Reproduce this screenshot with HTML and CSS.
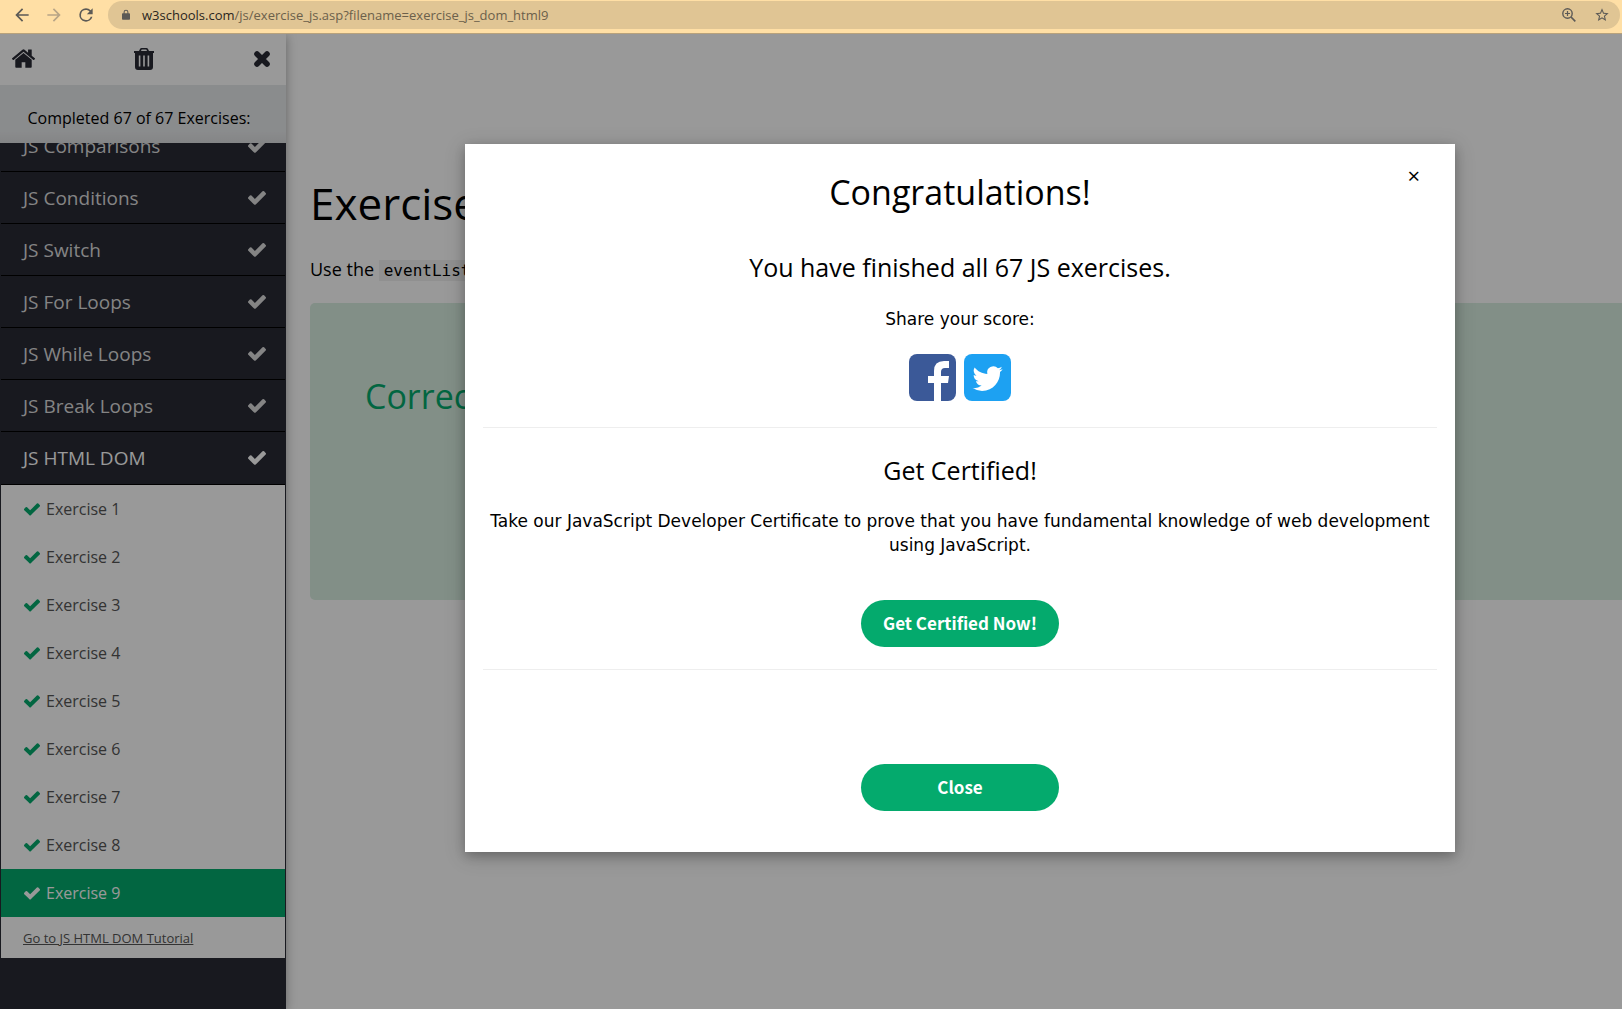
FILE: index.html
```html
<!DOCTYPE html>
<html lang="en">
<head>
<meta charset="utf-8">
<title>Exercise</title>
<link rel="stylesheet" href="styles.css">
</head>
<body>
<svg class="defs" aria-hidden="true">
  <symbol id="check" viewBox="121 341 1550 1188"><path d="M1671 566q0 40-28 68l-724 724-136 136q-28 28-68 28t-68-28l-136-136-362-362q-28-28-28-68t28-68l136-136q28-28 68-28t68 28l294 295 656-657q28-28 68-28t68 28l136 136q28 28 28 68z"/></symbol>
</svg>
<header class="browser">
  <button class="nav" aria-label="Back"><svg viewBox="0 0 24 24"><path d="M20 11H7.8l5.6-5.6L12 4l-8 8 8 8 1.4-1.4L7.8 13H20z"/></svg></button>
  <button class="nav dim" aria-label="Forward"><svg viewBox="0 0 24 24"><path d="M4 11h12.2l-5.6-5.6L12 4l8 8-8 8-1.4-1.4 5.6-5.6H4z"/></svg></button>
  <button class="nav" aria-label="Reload"><svg viewBox="0 0 24 24"><path d="M17.65 6.35A7.96 7.96 0 0 0 12 4a8 8 0 1 0 7.73 10h-2.08A6 6 0 1 1 12 6c1.66 0 3.14.69 4.22 1.78L13 11h7V4z"/></svg></button>
  <div class="address">
    <svg class="lock" viewBox="0 0 10 13"><path d="M1 5h1V3.500a3 3 0 0 1 6 0V5h1a1 1 0 0 1 1 1v6a1 1 0 0 1-1 1H1a1 1 0 0 1-1-1V6a1 1 0 0 1 1-1zM3.300 5h3.400V3.500a1.700 1.700 0 0 0-3.400 0z"/></svg>
    <span class="url"><b>w3schools.com</b>/js/exercise_js.asp?filename=exercise_js_dom_html9</span>
    <button class="tool" aria-label="Zoom"><svg class="outline" viewBox="0 0 14 14"><circle cx="5.500" cy="5.500" r="4.700" stroke-width="1.400"/><path d="M9 9l4.300 4.300" stroke-width="1.700"/><path d="M5.500 3v5M3 5.500h5" stroke-width="1.200"/></svg></button>
    <button class="tool" aria-label="Bookmark"><svg viewBox="0 0 24 24"><path d="M22 9.240l-7.190-.620L12 2 9.190 8.630 2 9.240l5.460 4.730L5.820 21 12 17.270 18.180 21l-1.630-7.030zM12 15.400l-3.760 2.270 1-4.280-3.320-2.880 4.380-.380L12 6.100l1.710 4.040 4.380.380-3.320 2.880 1 4.280z"/></svg></button>
  </div>
</header>
<div class="page">
  <aside class="sidebar">
    <div class="actions">
      <a href="#" aria-label="Home"><svg class="home" viewBox="0 0 1612 1283"><path d="M1382 739v480q0 26-19 45t-45 19H934V899H678v384H294q-26 0-45-19t-19-45V739q0-1 .5-3t.5-3l575-474 575 474q1 2 1 6zm223-69l-62 74q-8 9-21 11h-3q-13 0-21-7L806 171 114 748q-12 8-24 7-13-2-21-11L7 670q-8-10-7-23.500T11 625L730 26q32-26 76-26t76 26l244 204V35q0-14 9-23t23-9h192q14 0 23 9t9 23v408l219 182q10 8 11 21.500t-7 23.500z"/></svg></a>
      <button aria-label="Reset"><svg class="trash" viewBox="0 0 20 22"><path fill-rule="evenodd" d="M0 3h5l1-2q.5-1 1.500-1h5q1 0 1.500 1l1 2h5v2h-1v14q0 3-3 3H4q-3 0-3-3V5H0zm7 0h6l-.7-1.500H7.700zM4.800 7.500v11h1.600v-11zm4.400 0v11h1.600v-11zm4.400 0v11h1.600v-11z"/></svg></button>
      <button aria-label="Close menu"><svg class="cross" viewBox="0 0 18 18"><path d="M4 4l10 10M14 4L4 14" stroke="currentColor" stroke-width="5.600"/></svg></button>
    </div>
    <p class="progress">Completed 67 of 67 Exercises:</p>
    <nav class="topics">
      <a class="topic first" href="#">JS Comparisons<svg><use href="#check"/></svg></a>
      <a class="topic" href="#">JS Conditions<svg><use href="#check"/></svg></a>
      <a class="topic" href="#">JS Switch<svg><use href="#check"/></svg></a>
      <a class="topic" href="#">JS For Loops<svg><use href="#check"/></svg></a>
      <a class="topic" href="#">JS While Loops<svg><use href="#check"/></svg></a>
      <a class="topic" href="#">JS Break Loops<svg><use href="#check"/></svg></a>
      <a class="topic open" href="#">JS HTML DOM<svg><use href="#check"/></svg></a>
      <div class="exercises">
        <a href="#"><svg><use href="#check"/></svg>Exercise 1</a>
        <a href="#"><svg><use href="#check"/></svg>Exercise 2</a>
        <a href="#"><svg><use href="#check"/></svg>Exercise 3</a>
        <a href="#"><svg><use href="#check"/></svg>Exercise 4</a>
        <a href="#"><svg><use href="#check"/></svg>Exercise 5</a>
        <a href="#"><svg><use href="#check"/></svg>Exercise 6</a>
        <a href="#"><svg><use href="#check"/></svg>Exercise 7</a>
        <a href="#"><svg><use href="#check"/></svg>Exercise 8</a>
        <a class="current" href="#"><svg><use href="#check"/></svg>Exercise 9</a>
        <a class="tutorial" href="#">Go to JS HTML DOM Tutorial</a>
      </div>
    </nav>
  </aside>
  <main class="content">
    <h1>Exercise:</h1>
    <p class="task">Use the <code>eventListener</code></p>
    <section class="result"><h2>Correct!</h2></section>
  </main>
  <div class="overlay">
    <section class="modal" role="dialog" aria-labelledby="done">
      <button class="dismiss" aria-label="Dismiss">×</button>
      <h2 id="done">Congratulations!</h2>
      <h3 class="finished">You have finished all 67 JS exercises.</h3>
      <p class="share-label">Share your score:</p>
      <div class="share">
        <a href="#" aria-label="Facebook"><svg viewBox="0 0 47 47"><rect width="47" height="47" rx="8" fill="#3b5998"/><path fill="#fff" d="M25 47V29h-6v-7h6v-5q0-10 10-10h5v7h-4q-4 0-4 4v4h8l-1 7h-7v18z"/></svg></a>
        <a href="#" aria-label="Twitter"><svg viewBox="0 0 47 47"><rect width="47" height="47" rx="8" fill="#1da1f2"/><path fill="#fff" transform="translate(8.500 9.500) scale(1.260)" d="M23.950 4.570a10 10 0 0 1-2.820.770 4.960 4.960 0 0 0 2.160-2.720c-.950.550-2 .950-3.130 1.180a4.920 4.920 0 0 0-8.380 4.480C7.690 8.100 4.070 6.130 1.640 3.160a4.920 4.920 0 0 0 1.520 6.570 4.900 4.900 0 0 1-2.230-.610v.060a4.920 4.920 0 0 0 3.950 4.830 5 5 0 0 1-2.210.080 4.940 4.940 0 0 0 4.600 3.420A9.870 9.870 0 0 1 0 19.540a13.990 13.990 0 0 0 7.550 2.210c9.140 0 14.300-7.720 14.300-14.420 0-.220-.010-.440-.030-.660a10 10 0 0 0 2.130-2.100z"/></svg></a>
      </div>
      <hr>
      <h3 class="certified">Get Certified!</h3>
      <p class="pitch">Take our JavaScript Developer Certificate to prove that you have fundamental knowledge of web development using JavaScript.</p>
      <button class="primary">Get Certified Now!</button>
      <hr class="second">
      <button class="primary">Close</button>
    </section>
  </div>
</div>
</body>
</html>
```
FILE: styles.css
```css
* { box-sizing: border-box; }
body {
  margin: 0;
  min-height: 100vh;
  display: flex;
  flex-direction: column;
  background: #fff;
  color: #000;
  font: 16px/24px "Open Sans", "Noto Sans", sans-serif;
}
h1, h2, h3, p { margin: 0; font-weight: 400; }
a { color: inherit; text-decoration: none; }
button { padding: 0; border: 0; background: none; color: inherit; font: inherit; }
svg { display: block; fill: currentColor; }
.outline { fill: none; stroke: currentColor; }
.defs { position: absolute; width: 0; height: 0; }

.browser {
  display: flex;
  align-items: center;
  height: 34px;
  padding: 0 2px 4px 12px;
  border-bottom: 1px solid #b8a27c;
  background: #ffdfa5;
  color: #5c5a56;
}
.nav { width: 20px; margin-right: 12px; }
.nav svg { width: 20px; height: 20px; }
.nav.dim { color: #b8a586; }
.address {
  flex: 1;
  display: flex;
  align-items: center;
  height: 28px;
  padding: 0 10px 0 14px;
  border-radius: 14px;
  background: #e0c594;
}
.lock { width: 8px; height: 11px; margin-right: 12px; }
.url { flex: 1; font: 13px/20px "Open Sans", "Noto Sans", sans-serif; color: #6b604b; }
.url b { font-weight: 400; color: #2b261d; }
.tool { margin-left: 18px; }
.tool svg { width: 14px; height: 14px; }
.tool:last-child svg { width: 16px; height: 16px; }

.page { position: relative; flex: 1; display: flex; overflow: hidden; }
.sidebar {
  width: 286px;
  display: flex;
  flex-direction: column;
  background: #282a35;
  box-shadow: 0 2px 10px rgba(0, 0, 0, .35);
}
.actions {
  display: flex;
  align-items: center;
  justify-content: space-between;
  height: 51px;
  padding: 0 15px 2px 12px;
  background: #fff;
  color: #282a35;
}
.home { width: 23px; height: 19px; }
.trash { width: 20px; height: 22px; }
.cross { width: 18px; height: 18px; stroke-linecap: round; }
.progress {
  height: 58px;
  padding: 21px 8px 0 0;
  background: linear-gradient(#e7e9eb 80%, #dcdee0);
  text-align: center;
}
.topics { margin: 0 1px; overflow: hidden; }
.topic {
  display: flex;
  align-items: center;
  justify-content: space-between;
  height: 52px;
  padding: 0 19px 0 22px;
  border-bottom: 1px solid #000;
  color: #ddd;
  font-size: 19px;
}
.topic svg { width: 18px; height: 14px; }
.topic.first { margin-top: -23px; }
.topic.open { height: 53px; color: #fff; }
.exercises { background: #fff; color: #555; }
.exercises a { display: flex; align-items: center; height: 48px; padding: 0 0 0 23px; font-size: 16px; }
.exercises svg { width: 16px; height: 13px; margin-right: 6px; color: #04aa6d; }
.exercises .current { background: #04aa6d; color: #fff; }
.exercises .current svg { color: #fff; }
.exercises .tutorial { height: 41px; padding-left: 22px; font-size: 13px; text-decoration: underline; }

.content { flex: 1; padding: 137px 0 0 24px; }
h1 { font-size: 44px; line-height: 64px; }
.task { margin: 21px 0; font-size: 18px; line-height: 26px; }
.task code { padding: 1px 5px; background: #f1f1f1; font: 16px "DejaVu Sans Mono", monospace; }
.result { height: 297px; padding: 69px 55px; border-radius: 5px 0 0 5px; background: #d9eee1; color: #04aa6d; }
.result h2 { font-size: 34px; line-height: 48px; }

.overlay {
  position: absolute;
  inset: 0;
  display: flex;
  justify-content: center;
  align-items: flex-start;
  padding: 110px 0 0 298px;
  background: rgba(0, 0, 0, .4);
}
.modal {
  position: relative;
  display: flex;
  flex-direction: column;
  align-items: center;
  width: 990px;
  max-width: 75%;
  padding: 23px 18px 41px;
  background: #fff;
  text-align: center;
  box-shadow: 0 4px 10px rgba(0, 0, 0, .2), 0 4px 20px rgba(0, 0, 0, .19);
}
.dismiss { position: absolute; top: 19px; right: 35px; font-size: 22px; line-height: 24px; }
.modal h2 { font-size: 34px; line-height: 50px; }
.modal h3 { font-size: 25px; line-height: 36px; }
.finished { margin-top: 32px; }
.share-label, .pitch { font: 17px/24px "DejaVu Sans", sans-serif; }
.share-label { margin-top: 22px; }
.share { display: flex; gap: 8px; margin: 23px 0 26px; }
.share svg { width: 47px; height: 47px; }
hr { width: 100%; margin: 0; border: 0; border-top: 1px solid #eee; }
.certified { margin-top: 24px; }
.pitch { margin: 21px 0 43px; }
.primary {
  width: 198px;
  height: 47px;
  padding-bottom: 2px;
  border-radius: 24px;
  background: #04aa6d;
  color: #fff;
  font: 700 17px/27px "Noto Sans CJK SC", sans-serif;
}
.second { margin: 22px 0 94px; }
```
